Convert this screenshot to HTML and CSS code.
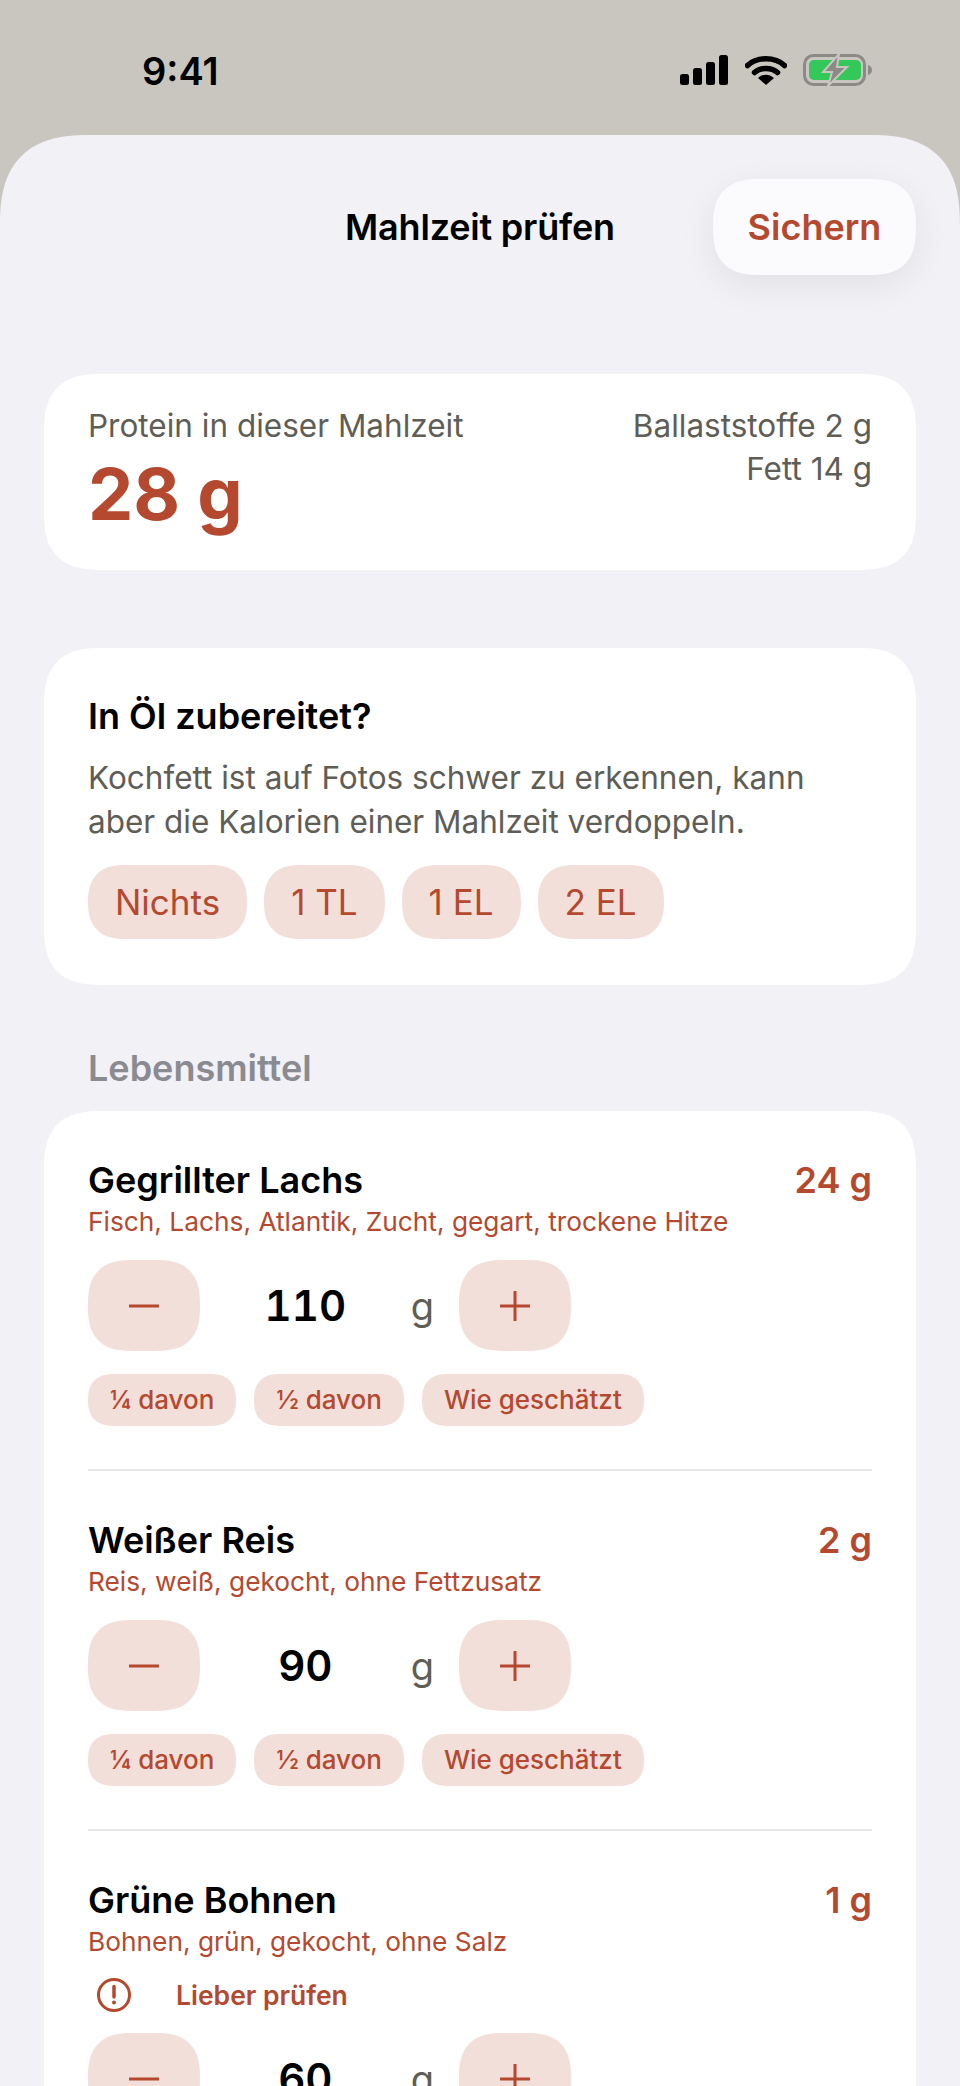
FILE: index.html
```html
<!DOCTYPE html>
<html lang="de">
<head>
    <meta charset="UTF-8">
    <meta name="viewport" content="width=device-width, initial-scale=1.0">
    <title>Mahlzeit prüfen</title>
    <link rel="stylesheet" href="styles.css">
</head>
<body>
    <div class="status_bar">
        <span class="time">9:41</span>
        <div class="status_icons">
            <svg width="49" height="30" viewBox="0 0 49 30"><rect x="0" y="19" width="9" height="11" rx="2.5"/><rect x="13" y="13" width="9" height="17" rx="2.5"/><rect x="26" y="7" width="9" height="23" rx="2.5"/><rect x="39" y="0" width="9" height="30" rx="2.5"/></svg>
            <svg width="42" height="30" viewBox="0 0 42 30"><path d="M2.500 10.500C12 1.500 30 1.500 39.500 10.500" fill="none" stroke="#000" stroke-width="5.500" stroke-linecap="round"/><path d="M9.500 17.500C15.500 12 26.500 12 32.500 17.500" fill="none" stroke="#000" stroke-width="5.500" stroke-linecap="round"/><path d="M13 23C18 18.500 24 18.500 29 23L21 30Z"/></svg>
            <svg width="69" height="32" viewBox="0 0 69 32"><rect x="1.500" y="1.500" width="60" height="29" rx="9" fill="none" stroke="#8b8a86" stroke-width="3"/><rect x="6" y="6" width="52" height="20" rx="5" fill="#34c759"/><path d="M65 11c2.500 .5 4 2.500 4 5s-1.500 4.500-4 5z" fill="#8b8a86"/><path d="M36 0L20 18h9l-4 14 19-19H34l2-13z" fill="#8b8a86" stroke="#c9c6c0" stroke-width="2"/></svg>
        </div>
    </div>

    <main class="sheet">
        <header class="nav">
            <span></span>
            <h1>Mahlzeit prüfen</h1>
            <button class="save_btn">Sichern</button>
        </header>

        <section class="card summary">
            <div>
                <p class="muted">Protein in dieser Mahlzeit</p>
                <p class="protein">28 g</p>
            </div>
            <div class="macros">
                <p class="muted">Ballaststoffe 2 g</p>
                <p class="muted">Fett 14 g</p>
            </div>
        </section>

        <section class="card oil">
            <h2>In Öl zubereitet?</h2>
            <p class="muted oil_text">Kochfett ist auf Fotos schwer zu erkennen, kann aber die Kalorien einer Mahlzeit verdoppeln.</p>
            <div class="oil_options">
                <span class="oil_pill">Nichts</span>
                <span class="oil_pill">1 TL</span>
                <span class="oil_pill">1 EL</span>
                <span class="oil_pill">2 EL</span>
            </div>
        </section>

        <h3 class="section_label">Lebensmittel</h3>

        <section class="card foods">
            <article class="food">
                <div class="food_head">
                    <h2>Gegrillter Lachs</h2>
                    <span class="food_protein">24 g</span>
                </div>
                <p class="food_sub">Fisch, Lachs, Atlantik, Zucht, gegart, trockene Hitze</p>
                <div class="stepper">
                    <button class="step_btn"><svg width="30" height="30" viewBox="0 0 30 30"><path d="M0 15H30"/></svg></button>
                    <span class="amount">110</span>
                    <span class="unit">g</span>
                    <button class="step_btn"><svg width="30" height="30" viewBox="0 0 30 30"><path d="M0 15H30M15 0V30"/></svg></button>
                </div>
                <div class="portions">
                    <span class="portion">¼ davon</span>
                    <span class="portion">½ davon</span>
                    <span class="portion">Wie geschätzt</span>
                </div>
            </article>

            <article class="food">
                <div class="food_head">
                    <h2>Weißer Reis</h2>
                    <span class="food_protein">2 g</span>
                </div>
                <p class="food_sub">Reis, weiß, gekocht, ohne Fettzusatz</p>
                <div class="stepper">
                    <button class="step_btn"><svg width="30" height="30" viewBox="0 0 30 30"><path d="M0 15H30"/></svg></button>
                    <span class="amount">90</span>
                    <span class="unit">g</span>
                    <button class="step_btn"><svg width="30" height="30" viewBox="0 0 30 30"><path d="M0 15H30M15 0V30"/></svg></button>
                </div>
                <div class="portions">
                    <span class="portion">¼ davon</span>
                    <span class="portion">½ davon</span>
                    <span class="portion">Wie geschätzt</span>
                </div>
            </article>

            <article class="food">
                <div class="food_head">
                    <h2>Grüne Bohnen</h2>
                    <span class="food_protein">1 g</span>
                </div>
                <p class="food_sub">Bohnen, grün, gekocht, ohne Salz</p>
                <div class="warning">
                    <svg width="36" height="36" viewBox="0 0 36 36"><circle cx="18" cy="18" r="15.500" fill="none" stroke="#b5492f" stroke-width="3"/><path d="M18 9.500V20" stroke="#b5492f" stroke-width="3.500" stroke-linecap="round"/><circle cx="18" cy="25.500" r="2" fill="#b5492f"/></svg>
                    <span>Lieber prüfen</span>
                </div>
                <div class="stepper">
                    <button class="step_btn"><svg width="30" height="30" viewBox="0 0 30 30"><path d="M0 15H30"/></svg></button>
                    <span class="amount">60</span>
                    <span class="unit">g</span>
                    <button class="step_btn"><svg width="30" height="30" viewBox="0 0 30 30"><path d="M0 15H30M15 0V30"/></svg></button>
                </div>
            </article>
        </section>
    </main>
</body>
</html>
```

FILE: styles.css
```css
*{
    margin: 0;
    padding: 0;
    box-sizing: border-box;
}

body{
    background-color: #c9c6c0;
    font-family: "Inter", "Liberation Sans", sans-serif;
    width: 960px;
    height: 2086px;
    overflow: hidden;
    color: #000;
}

button{
    font-family: inherit;
    border: none;
}

.status_bar{
    height: 135px;
    padding: 50px 88px 0 142px;
    display: flex;
    justify-content: space-between;
    align-items: flex-start;
}

.time{
    font-size: 38px;
    line-height: 42px;
    font-weight: 600;
}

.status_icons{
    display: flex;
    align-items: center;
    gap: 16px;
    padding-top: 4px;
}

.sheet{
    background-color: #f1f1f6;
    border-radius: 92px 92px 0 0;
    corner-shape: superellipse(1.4);
    height: 1951px;
    padding: 44px 44px 0;
}

.nav{
    display: grid;
    grid-template-columns: 203px 1fr 203px;
    align-items: center;
    height: 96px;
    margin-bottom: 99px;
}

.nav h1{
    font-size: 36px;
    font-weight: 600;
    text-align: center;
    letter-spacing: -0.2px;
}

.save_btn{
    height: 96px;
    border-radius: 48px;
    corner-shape: superellipse(1.4);
    background-color: #fbfbfe;
    color: #b5492f;
    font-size: 36px;
    font-weight: 600;
    box-shadow: 0 10px 36px rgba(0, 0, 0, 0.07);
}

.card{
    background-color: #fff;
    border-radius: 58px;
    corner-shape: superellipse(1.4);
    padding: 0 44px;
}

.muted{
    color: #5e5d56;
    font-size: 31.500px;
    line-height: 43px;
}

.summary{
    height: 196px;
    padding-top: 30px;
    margin-bottom: 78px;
    display: flex;
    justify-content: space-between;
}

.protein{
    color: #b5492f;
    font-size: 72px;
    line-height: 78px;
    font-weight: 700;
    margin-top: 8px;
}

.macros{
    text-align: right;
}

.oil{
    height: 337px;
    padding-top: 47px;
    margin-bottom: 61px;
}

.oil h2, .food h2{
    font-size: 36px;
    line-height: 42px;
    font-weight: 600;
}

.oil_text{
    margin-top: 19px;
    line-height: 44px;
}

.oil_options{
    display: flex;
    gap: 17px;
    margin-top: 21px;
}

.oil_pill{
    background-color: #f3dfda;
    color: #b5492f;
    font-size: 35px;
    height: 74px;
    line-height: 74px;
    padding: 0 27px;
    border-radius: 37px;
    corner-shape: superellipse(1.3);
}

.section_label{
    color: #8a8a91;
    font-size: 36px;
    line-height: 44px;
    font-weight: 600;
    padding-left: 44px;
    margin-bottom: 21px;
}

.foods{
    height: 975px;
    overflow: hidden;
    border-radius: 58px 58px 0 0;
}

.food{
    padding-top: 47px;
    height: 360px;
    border-bottom: 2px solid #e6e6e8;
}

.food:last-child{
    border-bottom: none;
}

.food_head{
    display: flex;
    justify-content: space-between;
    align-items: center;
}

.food_protein{
    color: #b5492f;
    font-size: 36px;
    font-weight: 600;
}

.food_sub{
    color: #b5492f;
    font-size: 26.300px;
    line-height: 34px;
    margin-top: 3px;
}

.stepper{
    display: flex;
    align-items: center;
    width: 483px;
    margin-top: 21px;
}

.step_btn{
    width: 112px;
    height: 91px;
    border-radius: 45px;
    corner-shape: superellipse(1.4);
    background-color: #f3dfda;
    display: flex;
    align-items: center;
    justify-content: center;
}

.step_btn svg{
    fill: none;
    stroke: #b5492f;
    stroke-width: 3px;
}

.amount{
    flex: 1;
    text-align: center;
    font-size: 42px;
    font-weight: 600;
    font-variant-numeric: tabular-nums;
}

.unit{
    color: #5e5d56;
    font-size: 38px;
    margin-right: 25px;
}

.portions{
    display: flex;
    gap: 18px;
    margin-top: 23px;
}

.portion{
    background-color: #f3dfda;
    color: #b5492f;
    font-size: 26px;
    font-weight: 500;
    height: 52px;
    line-height: 52px;
    padding: 0 22px;
    border-radius: 26px;
    corner-shape: superellipse(1.3);
}

.warning{
    display: flex;
    align-items: center;
    gap: 44px;
    padding-left: 8px;
    margin-top: 18px;
    color: #b5492f;
    font-size: 26.500px;
    font-weight: 600;
}

.warning + .stepper{
    margin-top: 20px;
}
```
